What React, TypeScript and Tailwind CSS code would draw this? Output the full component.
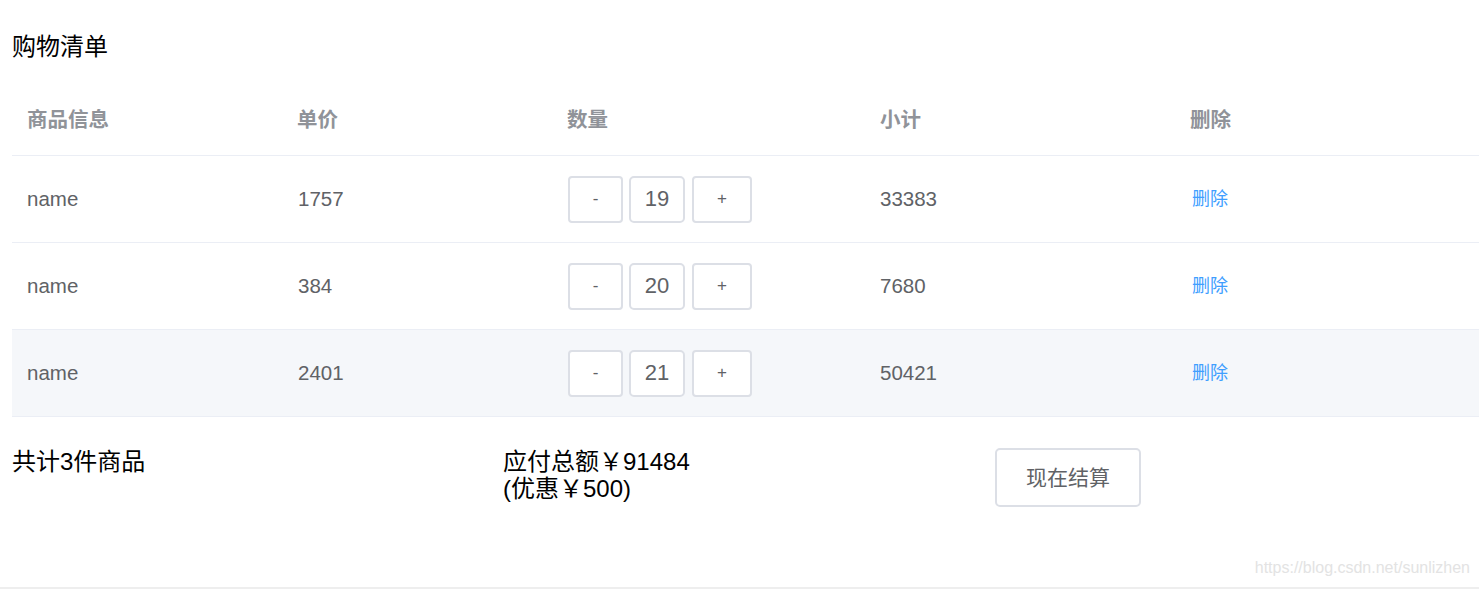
import React from "react";

const rows = [
  { name: "name", price: 1757, qty: 19, sub: 33383, hover: false },
  { name: "name", price: 384, qty: 20, sub: 7680, hover: false },
  { name: "name", price: 2401, qty: 21, sub: 50421, hover: true },
];

const font = { fontFamily: '"Liberation Sans", Arial, "Noto Sans CJK SC", sans-serif' };

export default function App() {
  return (
    <div className="relative w-[1479px] h-[589px] bg-white overflow-hidden" style={font}>
      <div className="pl-[12px]">
        <h2 className="pt-[31px] text-[24px] leading-[32px] text-black">购物清单</h2>
        <div className="mt-[23px] w-[1467px]">
          <div className="flex h-[70px] items-center border-b border-[#ebeef5] text-[20.5px] font-bold text-[#909399]">
            <div className="w-[270px] pl-[15px]">商品信息</div>
            <div className="w-[270px] pl-[15px]">单价</div>
            <div className="w-[313px] pl-[15px]">数量</div>
            <div className="w-[310px] pl-[15px]">小计</div>
            <div className="flex-1 pl-[15px]">删除</div>
          </div>
          {rows.map((r, i) => (
            <div
              key={i}
              className={`flex h-[87px] items-center border-b border-[#ebeef5] text-[20.5px] text-[#606266] ${r.hover ? "bg-[#f5f7fa]" : "bg-white"}`}
            >
              <div className="w-[270px] pl-[15px]">{r.name}</div>
              <div className="w-[270px] pl-[16px]">{r.price}</div>
              <div className="w-[313px] pl-[16px] flex items-center">
                <div className="w-[55px] h-[47px] flex items-center justify-center border-2 border-[#dcdfe6] rounded-[4px] bg-white text-[17px] text-[#606266]">-</div>
                <div className="ml-[6px] w-[56px] h-[47px] flex items-center justify-center border-2 border-[#dcdfe6] rounded-[5px] bg-white text-[22px] text-[#606266] pb-[1px]">{r.qty}</div>
                <div className="ml-[7px] w-[60px] h-[47px] flex items-center justify-center border-2 border-[#dcdfe6] rounded-[4px] bg-white text-[17px] text-[#606266]">+</div>
              </div>
              <div className="w-[310px] pl-[15px]">{r.sub}</div>
              <div className="flex-1 pl-[17px] text-[18px] text-[#409eff]">删除</div>
            </div>
          ))}
        </div>
        <div className="flex items-start pt-[31px]">
          <div className="w-[491px] text-[24px] leading-[28px] text-black">共计3件商品</div>
          <div className="w-[492px] text-[24px] leading-[27px] text-black">
            <div>应付总额￥91484</div>
            <div>(优惠￥500)</div>
          </div>
          <div className="w-[146px] h-[59px] flex items-center justify-center border-2 border-[#dcdfe6] rounded-[5px] text-[21px] text-[#606266] bg-white">
            现在结算
          </div>
        </div>
      </div>
      <div className="absolute right-[9px] bottom-[9px] text-[16px] text-[#e3e3e3]">https://blog.csdn.net/sunlizhen</div>
      <div className="absolute left-0 right-0 bottom-0 h-[2px] bg-[#eeeeee]" />
    </div>
  );
}
